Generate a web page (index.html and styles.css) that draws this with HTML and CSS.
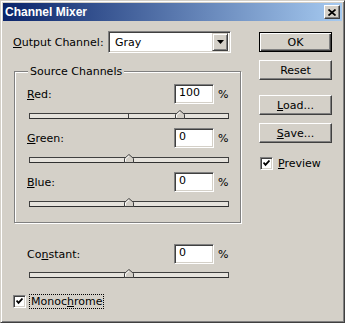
FILE: index.html
```html
<!DOCTYPE html>
<html lang="en">
<head>
  <meta charset="UTF-8">
  <title>Channel Mixer</title>
  <link rel="stylesheet" href="styles.css">
</head>
<body>
  <div class="dialog">
    <div class="titlebar">
      <span class="title">Channel Mixer</span>
      <div class="close">
        <svg width="8" height="7" viewBox="0 0 8 7"><path d="M0.5 0.5 L7.5 6.5 M7.5 0.5 L0.5 6.5" stroke="#000" stroke-width="1.7" fill="none"/></svg>
      </div>
    </div>
    <div class="content">
      <div class="main">
        <div class="output-row">
          <span class="output-label"><u>O</u>utput Channel:</span>
          <div class="select">
            <span class="select-text">Gray</span>
            <span class="select-btn">
              <svg width="7" height="4" viewBox="0 0 7 4"><path d="M0 0 H7 L3.5 4 Z" fill="#000"/></svg>
            </span>
          </div>
        </div>

        <fieldset class="group">
          <legend>Source Channels</legend>
          <div class="channel">
            <div class="channel-head">
              <span class="name"><u>R</u>ed:</span>
              <span class="field">100</span>
              <span class="pct">%</span>
            </div>
            <div class="track">
              <span class="tick"></span>
              <svg class="thumb" style="left:145px" width="10" height="9" viewBox="0 0 10 9"><path d="M0.5 8.5 V4.5 L5 0.5 L9.5 4.5 V8.5 Z" fill="#d4d0c8" stroke="#404040"/><path d="M1.5 7.5 V4.9 L5 1.8" stroke="#fff" fill="none"/></svg>
            </div>
          </div>
          <div class="channel">
            <div class="channel-head">
              <span class="name"><u>G</u>reen:</span>
              <span class="field">0</span>
              <span class="pct">%</span>
            </div>
            <div class="track">
              <svg class="thumb" style="left:94px" width="10" height="9" viewBox="0 0 10 9"><path d="M0.5 8.5 V4.5 L5 0.5 L9.5 4.5 V8.5 Z" fill="#d4d0c8" stroke="#404040"/><path d="M1.5 7.5 V4.9 L5 1.8" stroke="#fff" fill="none"/></svg>
            </div>
          </div>
          <div class="channel">
            <div class="channel-head">
              <span class="name"><u>B</u>lue:</span>
              <span class="field">0</span>
              <span class="pct">%</span>
            </div>
            <div class="track">
              <svg class="thumb" style="left:94px" width="10" height="9" viewBox="0 0 10 9"><path d="M0.5 8.5 V4.5 L5 0.5 L9.5 4.5 V8.5 Z" fill="#d4d0c8" stroke="#404040"/><path d="M1.5 7.5 V4.9 L5 1.8" stroke="#fff" fill="none"/></svg>
            </div>
          </div>
        </fieldset>

        <div class="channel constant">
          <div class="channel-head">
            <span class="name">Co<u>n</u>stant:</span>
            <span class="field">0</span>
            <span class="pct">%</span>
          </div>
          <div class="track">
            <svg class="thumb" style="left:94px" width="10" height="9" viewBox="0 0 10 9"><path d="M0.5 8.5 V4.5 L5 0.5 L9.5 4.5 V8.5 Z" fill="#d4d0c8" stroke="#404040"/><path d="M1.5 7.5 V4.9 L5 1.8" stroke="#fff" fill="none"/></svg>
          </div>
        </div>

        <div class="check mono">
          <span class="box">
            <svg width="7" height="7" viewBox="0 0 7 7"><path d="M0.5 2.5 L2.5 4.8 L6.5 0.5" stroke="#000" stroke-width="1.8" fill="none"/></svg>
          </span>
          <span class="check-label focus">Monoc<u>h</u>rome</span>
        </div>
      </div>

      <div class="side">
        <div class="btn default">OK</div>
        <div class="btn reset">Reset</div>
        <div class="btn load"><u>L</u>oad...</div>
        <div class="btn save"><u>S</u>ave...</div>
        <div class="check preview">
          <span class="box">
            <svg width="7" height="7" viewBox="0 0 7 7"><path d="M0.5 2.5 L2.5 4.8 L6.5 0.5" stroke="#000" stroke-width="1.8" fill="none"/></svg>
          </span>
          <span class="check-label"><u>P</u>review</span>
        </div>
      </div>
    </div>
  </div>
</body>
</html>
```

FILE: styles.css
```css
body {
  margin: 0;
  font-family: "DejaVu Sans", Tahoma, sans-serif;
  font-size: 11px;
  color: #000;
}

u {
  text-underline-offset: 1px;
}

.dialog {
  width: 345px;
  height: 323px;
  box-sizing: border-box;
  padding: 2px;
  display: flex;
  flex-direction: column;
  background: #d4d0c8;
  border: 1px solid;
  border-color: #d4d0c8 #404040 #404040 #d4d0c8;
  box-shadow: inset 1px 1px #fff, inset -1px -1px #808080;
}

/* title bar */
.titlebar {
  height: 18px;
  display: flex;
  align-items: center;
  justify-content: space-between;
  padding: 0 2px;
  background: linear-gradient(to right, #0a246a, #a6caf0);
}
.title {
  color: #fff;
  font: bold 12px "Liberation Sans", Arial, sans-serif;
}
.close {
  width: 16px;
  height: 14px;
  box-sizing: border-box;
  display: flex;
  align-items: center;
  justify-content: center;
  background: #d4d0c8;
  border: 1px solid;
  border-color: #fff #404040 #404040 #fff;
  box-shadow: inset -1px -1px #808080;
}

.content {
  flex: 1;
  display: flex;
}

.main {
  width: 256px;
  box-sizing: border-box;
  padding: 10px 0 0 10px;
}

/* output channel */
.output-row {
  display: flex;
  align-items: center;
  height: 22px;
}
.output-label {
  width: 95px;
}
.select {
  width: 123px;
  height: 22px;
  box-sizing: border-box;
  display: flex;
  align-items: center;
  justify-content: space-between;
  background: #fff;
  border: 1px solid;
  border-color: #808080 #fff #fff #808080;
  box-shadow: inset 1px 1px #404040, inset -1px -1px #d4d0c8;
  padding: 2px 2px 2px 0;
}
.select-text {
  padding-left: 6px;
}
.select-btn {
  width: 16px;
  height: 18px;
  box-sizing: border-box;
  display: flex;
  align-items: center;
  justify-content: center;
  background: #d4d0c8;
  border: 1px solid;
  border-color: #d4d0c8 #404040 #404040 #d4d0c8;
  box-shadow: inset 1px 1px #fff, inset -1px -1px #808080;
}

/* group box */
.group {
  width: 227px;
  box-sizing: border-box;
  margin: 12px 0 0 1px;
  padding: 6px 0 15px 12px;
  border: 1px solid #808080;
  box-shadow: inset 1px 1px #fff, 1px 1px #fff;
}
.group legend {
  margin-left: 1px;
  padding: 0 2px;
  background: #d4d0c8;
  line-height: 13px;
}

.channel {
  margin-bottom: 9px;
}
.group .channel:last-child {
  margin-bottom: 0;
}
.channel-head {
  width: 201px;
  height: 20px;
  display: flex;
  align-items: center;
}
.name {
  flex: 1;
}
.field {
  width: 40px;
  height: 20px;
  box-sizing: border-box;
  padding: 0 0 0 4px;
  line-height: 16px;
  background: #fff;
  border: 1px solid;
  border-color: #808080 #fff #fff #808080;
  box-shadow: inset 1px 1px #404040, inset -1px -1px #d4d0c8;
}
.pct {
  width: 10px;
  margin-left: 4px;
}

.track {
  position: relative;
  width: 200px;
  height: 6px;
  box-sizing: border-box;
  margin: 9px 0 0 2px;
  background: #e6e3dd;
  border: 1px solid;
  border-color: #404040 #404040 #303030 #404040;
}
.tick {
  position: absolute;
  left: 98px;
  top: 0;
  width: 1px;
  height: 4px;
  background: #404040;
}
.thumb {
  position: absolute;
  bottom: -1px;
  display: block;
}

.constant {
  margin: 21px 0 0 14px;
}
.constant .track {
  margin-top: 8px;
}

/* check boxes */
.check {
  display: flex;
  align-items: center;
}
.box {
  width: 13px;
  height: 13px;
  box-sizing: border-box;
  display: flex;
  align-items: center;
  justify-content: center;
  background: #fff;
  border: 1px solid;
  border-color: #808080 #fff #fff #808080;
  box-shadow: inset 1px 1px #404040, inset -1px -1px #d4d0c8;
}
.check-label {
  margin-left: 5px;
}
.mono {
  margin-top: 17px;
}
.focus {
  outline: 1px dotted #000;
  padding: 0 1px;
  margin-left: 4px;
}

/* right column */
.side {
  padding-top: 11px;
  display: flex;
  flex-direction: column;
}
.btn {
  width: 73px;
  height: 20px;
  box-sizing: border-box;
  display: flex;
  align-items: center;
  justify-content: center;
  border: 1px solid;
  border-color: #fff #404040 #404040 #fff;
  box-shadow: inset -1px -1px #808080;
}
.btn.default {
  border-color: #000;
  box-shadow: inset 1px 1px #fff, inset -1px -1px #404040, inset -2px -2px #808080;
}
.reset {
  margin-top: 8px;
}
.load {
  margin-top: 15px;
}
.save {
  margin-top: 8px;
}
.preview {
  margin: 14px 0 0 1px;
}
```
